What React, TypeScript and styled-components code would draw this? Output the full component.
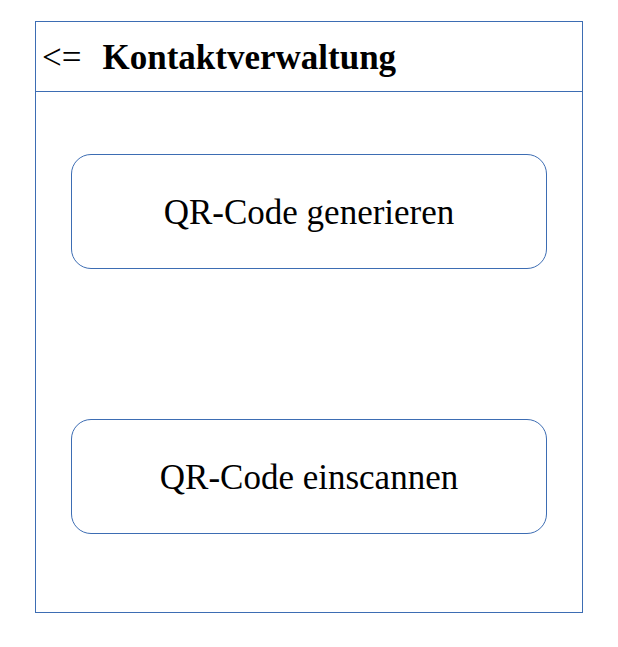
import React from "react";
import styled, { createGlobalStyle } from "styled-components";

const lineColor = "#3d6db3";

const GlobalStyle = createGlobalStyle`
  body {
    margin: 0;
    background: #ffffff;
    color: #000000;
    font-family: "Liberation Serif", "Times New Roman", serif;
    font-size: 35px;
    line-height: 40px;
  }
`;

const Page = styled.div`
  padding: 21px 35px 34px;
`;

const Screen = styled.main`
  border: 1px solid ${lineColor};
`;

const Header = styled.header`
  display: flex;
  align-items: center;
  gap: 21px;
  padding: 16px 6px 13px;
  border-bottom: 1px solid ${lineColor};
`;

const BackButton = styled.button`
  padding: 0;
  border: 0;
  background: transparent;
  color: inherit;
  font: inherit;
  cursor: pointer;
`;

const Title = styled.h1`
  margin: 0;
  font-size: 35px;
  font-weight: 700;
`;

const Actions = styled.div`
  display: flex;
  flex-direction: column;
  gap: 150px;
  padding: 62px 35px 78px;
`;

const ActionButton = styled.button`
  padding: 38px 0 35px;
  border: 1px solid ${lineColor};
  border-radius: 20px;
  background: #ffffff;
  color: inherit;
  font: inherit;
  cursor: pointer;
`;

export default function App() {
  return (
    <>
      <GlobalStyle />
      <Page>
        <Screen>
          <Header>
            <BackButton type="button">&lt;=</BackButton>
            <Title>Kontaktverwaltung</Title>
          </Header>
          <Actions>
            <ActionButton type="button">QR-Code generieren</ActionButton>
            <ActionButton type="button">QR-Code einscannen</ActionButton>
          </Actions>
        </Screen>
      </Page>
    </>
  );
}
